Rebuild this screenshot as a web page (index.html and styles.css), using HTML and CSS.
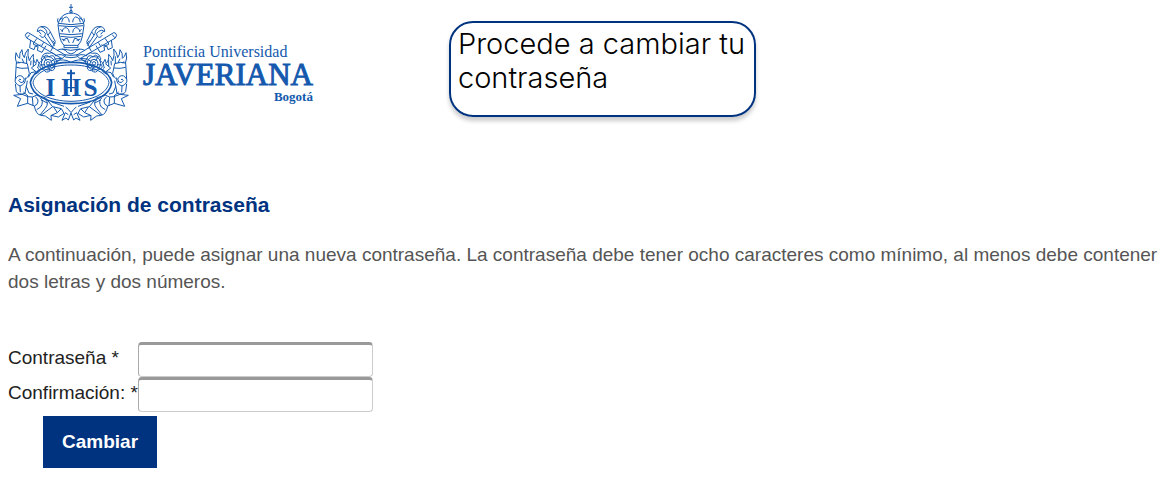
FILE: index.html
```html
<!DOCTYPE html>
<html lang="es">
<head>
<meta charset="utf-8">
<meta name="viewport" content="width=device-width, initial-scale=1">
<title>Asignación de contraseña</title>
<link rel="stylesheet" href="styles.css">
</head>
<body>
<header class="header">
  <div class="brand">
    <svg class="crest" viewBox="0 0 396 375" role="img" aria-label="Escudo Javeriana">
      <defs>
        <g id="half">
          <!-- tiara -->
          <path d="M198 39C176 40 163 52 159 75L164 110Q168 128 177 136H198M159 55Q155 63 161 70L198 74M161 77L198 80M163 101L198 104M166 109L198 112M177 136V143H198M170 67Q173 51 185 51Q193 54 193 67M171 96Q174 82 184 83Q193 86 193 98M174 124Q178 114 187 115L193 129M165 59L174 53M166 88L174 94M170 117L181 121"/>
          <!-- lappet -->
          <path d="M142 142L151 125L134 92Q126 77 108 80Q96 83 97 95Q105 86 115 94Q126 101 119 109Q111 117 104 105M108 80Q126 85 126 101L149 137M119 109L145 145M100 93L109 103M136 96L129 105M143 122L151 131"/>
          <!-- key -->
          <path d="M65 99Q57 105 65 114L171 176L182 166L75 101Q70 96 65 99ZM74 104L67 113M96 115L88 126M116 127L109 139M143 143L137 154M77 120L74 143L87 149L91 138L99 141L97 151L111 157L123 137M85 127L86 134L101 138L106 133M157 151Q174 141 188 158L198 162M171 147L198 151M176 164L198 166M151 167Q170 159 182 171L198 173"/>
          <!-- rose -->
          <circle cx="129" cy="190" r="20"/><circle cx="129" cy="190" r="12"/><circle cx="129" cy="190" r="5"/>
          <path d="M112 182Q103 172 117 170Q124 161 132 170Q147 162 150 176Q161 187 149 197Q151 213 136 212Q123 222 116 209Q101 207 106 194Q98 188 112 182M117 170L124 182M149 177L136 186M149 199L138 195M134 212L131 201M108 195L120 194M111 170Q118 156 133 160Q144 154 153 169M149 177L170 175Q159 185 152 186"/>
          <!-- flames and leaves -->
          <path d="M35 190Q28 174 33 158Q37 171 44 175Q42 158 51 149Q51 165 58 173Q59 158 70 147Q66 166 73 182Q77 171 85 163Q84 183 92 190M39 184L42 190M51 176L57 189M65 169L65 190M78 182L77 196M85 179L85 199M92 190L96 178L102 190L98 204L106 212M95 191L79 204L93 215L78 218L70 232M104 214L91 223"/>
          <!-- ribbon -->
          <path d="M34 189Q47 184 67 191L73 220Q67 238 61 234Q63 252 45 258Q27 250 31 238L34 189M34 202Q50 207 69 204M31 238Q39 222 52 229Q62 237 55 246Q46 252 41 241Q44 235 48 239M67 242L64 260L72 279L84 282M31 251L34 275Q42 286 60 280L64 257M45 258L46 277M55 276L69 288"/>
          <path d="M51 283L26 286L47 296L37 319L68 310L88 318Q93 344 108 346L143 320L121 293L94 286L82 291L69 290L51 283M68 290L68 310M82 291L84 317M91 291Q104 298 96 313L88 318M105 293Q118 304 107 321L95 329M120 298Q134 308 121 325L105 345M108 299L128 310M143 320L169 326L177 340L160 351L138 346L139 361L121 348L108 346M146 321L157 338L139 346M168 327L157 338M182 321Q191 328 198 338M190 344L181 338L171 361L183 354L190 360L198 339M140 306L177 319"/>
          <!-- central cartouche -->
          <path class="bold" d="M198 187C136 186 84 210 76 247C80 286 128 311 198 311"/>
          <path d="M198 195C142 194 91 216 84 247C88 280 134 303 198 304M151 184Q175 174 198 187"/>
        </g>
      </defs>
      <use href="#half"/>
      <use href="#half" transform="translate(396 0) scale(-1 1)"/>
      <path d="M198 12V39M192 22H204"/>
      <circle cx="198" cy="35" r="4"/>
      <path class="cross" d="M198 209V276M186 220H210"/>
      <g class="monogram" text-anchor="middle">
        <text x="136" y="287">I</text>
        <text x="198" y="287">H</text>
        <text x="257" y="287">S</text>
      </g>
    </svg>
    <div class="wordmark">
      <span class="university">Pontificia Universidad</span>
      <span class="name">JAVERIANA</span>
      <strong class="city">Bogotá</strong>
    </div>
  </div>
  <p class="callout">Procede a cambiar tu contraseña</p>
</header>
<main class="content">
  <h1 class="title">Asignación de contraseña</h1>
  <p class="intro">A continuación, puede asignar una nueva contraseña. La contraseña debe tener ocho caracteres como mínimo, al menos debe contener dos letras y dos números.</p>
  <form class="form">
    <label class="label" for="password">Contraseña *</label>
    <input class="field" id="password" type="password">
    <label class="label" for="confirmation">Confirmación: *</label>
    <input class="field" id="confirmation" type="password">
    <button class="submit" type="button">Cambiar</button>
  </form>
</main>
</body>
</html>
```

FILE: styles.css
```css
* { box-sizing: border-box; }

body {
  margin: 0;
  background: #fff;
  color: #222;
  font-family: "Liberation Sans", Arial, sans-serif;
  font-size: 19px;
}

.header {
  display: flex;
  align-items: flex-start;
  gap: 136px;
  padding: 0 5px;
}

.brand {
  display: flex;
  align-items: flex-start;
  gap: 6px;
  color: #1459ad;
}

.crest {
  width: 132px;
  height: 125px;
  fill: none;
  stroke: currentColor;
  stroke-width: 3;
  stroke-linejoin: round;
}

.crest .bold { stroke-width: 5; }
.crest .cross { stroke-width: 6; }

.crest .monogram {
  fill: currentColor;
  stroke: none;
  font: bold 76px "Liberation Serif", serif;
}

.wordmark {
  display: flex;
  flex-direction: column;
  padding-top: 42px;
  font-family: "Liberation Serif", "Times New Roman", serif;
}

.university { font-size: 16px; line-height: 20px; }
.name { font-size: 31px; line-height: 26px; -webkit-text-stroke: 1px currentColor; }
.city { align-self: flex-end; font-size: 13px; line-height: 18px; }

.callout {
  width: 307px;
  min-height: 96px;
  margin: 21px 0 0;
  padding: 4px 4px 4px 7px;
  border: 2px solid #00337f;
  border-radius: 24px;
  box-shadow: 0 4px 4px rgba(0, 0, 0, 0.2);
  color: #000;
  font-family: Inter, sans-serif;
  font-size: 29px;
  font-weight: 300;
  line-height: 34px;
}

.content { padding: 64px 8px 0; }

.title {
  margin: 0;
  color: #00337f;
  font-size: 21px;
  line-height: 32px;
}

.intro {
  margin: 20px 0 0;
  color: #555;
  font-size: 19px;
  line-height: 27px;
}

.form {
  display: grid;
  grid-template-columns: max-content 235px;
  justify-content: start;
  align-items: center;
  margin-top: 47px;
}

.label { padding-bottom: 4px; white-space: nowrap; }

.field {
  width: 100%;
  height: 35px;
  padding: 4px 8px;
  border: 1px solid #ccc;
  border-top: 3px solid #999;
  border-left-color: #aaa;
  border-radius: 4px;
  background: #fff;
  font: inherit;
}

.submit {
  grid-column: 1 / -1;
  justify-self: start;
  margin: 4px 0 0 35px;
  padding: 15px 19px;
  border: 0;
  background: #00337f;
  color: #fff;
  font: bold 19px/22px "Liberation Sans", Arial, sans-serif;
}
```
